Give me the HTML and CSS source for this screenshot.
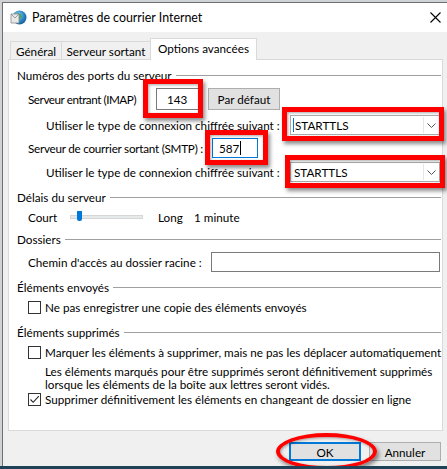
FILE: index.html
```html
<!DOCTYPE html>
<html lang="fr">
<head>
<meta charset="utf-8">
<link rel="stylesheet" href="styles.css">
</head>
<body>
<div class="window">
  <div class="titlebar">
    <svg class="app-icon" width="17" height="17" viewBox="0 0 17 17">
      <defs>
        <radialGradient id="g" cx="0.4" cy="0.35" r="0.7">
          <stop offset="0" stop-color="#9fd8f0"/>
          <stop offset="0.6" stop-color="#2a86c4"/>
          <stop offset="1" stop-color="#135d96"/>
        </radialGradient>
      </defs>
      <circle cx="9.5" cy="8.5" r="7" fill="url(#g)"/>
      <path d="M7 4 l4 1 l1 3 l-2 2 l-1 4 l-2 -3 z" fill="#3aa35a" opacity="0.8"/>
      <path d="M1 5 h8 v9 h-8 z" fill="#e8e8e8" stroke="#8a8a8a" stroke-width="0.8"/>
      <path d="M1 5 l4 4 l4 -4" fill="none" stroke="#8a8a8a" stroke-width="0.8"/>
    </svg>
    <span class="title">Paramètres de courrier Internet</span>
    <svg class="close" width="11" height="11" viewBox="0 0 11 11">
      <path d="M0.5 0.5 L10.5 10.5 M10.5 0.5 L0.5 10.5" stroke="#000" stroke-width="1.1"/>
    </svg>
  </div>
  <div class="content">
    <div class="tabs">
      <div class="tab tab-gen">Général</div>
      <div class="tab tab-out">Serveur sortant</div>
      <div class="tab tab-adv active">Options avancées</div>
    </div>
    <div class="pane">
      <div class="head h1"><span>Numéros des ports du serveur</span><i class="line"></i></div>

      <div class="row r-imap">
        <span class="lbl lbl-imap">Serveur entrant (IMAP)</span>
        <span class="mark-wrap">
          <span class="input in-imap">143</span>
          <span class="redbox rb-imap"></span>
        </span>
        <span class="btn btn-def">Par défaut</span>
      </div>

      <div class="row r-enc1">
        <span class="lbl lbl-enc">Utiliser le type de connexion chiffrée suivant :</span>
        <span class="mark-wrap">
          <span class="select sel1"><span class="caret"></span>STARTTLS<span class="chev"><svg width="9" height="5" viewBox="0 0 9 5"><path d="M0.5 0.5 L4.5 4.5 L8.5 0.5" fill="none" stroke="#555" stroke-width="1"/></svg></span></span>
          <span class="redbox rb-enc1"></span>
        </span>
      </div>

      <div class="row r-smtp">
        <span class="lbl lbl-smtp">Serveur de courrier sortant (SMTP) :</span>
        <span class="mark-wrap">
          <span class="input in-smtp focus">587<span class="cursor"></span></span>
          <span class="redbox rb-smtp"></span>
        </span>
      </div>

      <div class="row r-enc2">
        <span class="lbl lbl-enc">Utiliser le type de connexion chiffrée suivant :</span>
        <span class="mark-wrap">
          <span class="select sel2">STARTTLS<span class="chev"><svg width="9" height="5" viewBox="0 0 9 5"><path d="M0.5 0.5 L4.5 4.5 L8.5 0.5" fill="none" stroke="#555" stroke-width="1"/></svg></span></span>
          <span class="redbox rb-enc2"></span>
        </span>
      </div>

      <div class="head h2"><span>Délais du serveur</span><i class="line"></i></div>
      <div class="row r-slider">
        <span class="lbl lbl-court">Court</span>
        <span class="track"><span class="thumb"></span></span>
        <span class="lbl lbl-long">Long</span>
        <span class="lbl">1 minute</span>
      </div>

      <div class="head h3"><span>Dossiers</span><i class="line"></i></div>
      <div class="row r-path">
        <span class="lbl lbl-path">Chemin d'accès au dossier racine :</span>
        <span class="input in-path"></span>
      </div>

      <div class="head h4"><span>Éléments envoyés</span><i class="line"></i></div>
      <div class="row r-chk1">
        <span class="chk"></span>
        <span class="lbl">Ne pas enregistrer une copie des éléments envoyés</span>
      </div>

      <div class="head h5"><span>Éléments supprimés</span><i class="line"></i></div>
      <div class="row r-chk2">
        <span class="chk"></span>
        <span class="lbl nowrap">Marquer les éléments à supprimer, mais ne pas les déplacer automatiquement</span>
      </div>
      <p class="para">Les éléments marqués pour être supprimés seront définitivement supprimés<br>lorsque les éléments de la boîte aux lettres seront vidés.</p>
      <div class="row r-chk3">
        <span class="chk checked"><svg width="11" height="11" viewBox="0 0 11 11"><path d="M1.5 5.5 L4.2 8.3 L9.8 2.2" fill="none" stroke="#222" stroke-width="1.1"/></svg></span>
        <span class="lbl">Supprimer définitivement les éléments en changeant de dossier en ligne</span>
      </div>
    </div>
    <div class="footer">
      <span class="mark-wrap">
        <span class="btn btn-ok">OK</span>
        <span class="ellipse"></span>
      </span>
      <span class="btn btn-cancel">Annuler</span>
    </div>
  </div>
</div>
</body>
</html>
```

FILE: styles.css
```css
* { box-sizing: border-box; }
html, body { margin: 0; padding: 0; }
body {
  width: 447px;
  height: 469px;
  overflow: hidden;
  background: #cfd3d6;
  font-family: Lato, "Noto Sans", sans-serif;
  font-size: 11.7px;
  color: #000;
  position: relative;
}
.window {
  position: relative;
  margin: 2px 0 0 2px;
  width: 450px;
  height: 464px;
  border-left: 1px solid #6f6f6f;
  border-top: 1px solid #6f6f6f;
  background: #f0f0f0;
  display: flex;
  flex-direction: column;
}
body::after {
  content: "";
  position: absolute;
  left: 0; right: 0; bottom: 0;
  height: 3px;
  background: #1e4257;
}
.titlebar {
  height: 29px;
  background: #fff;
  display: flex;
  align-items: center;
  padding-left: 7px;
}
.app-icon { flex: none; }
.title { margin-left: 5px; font-size: 12.4px; }
.close { margin-left: auto; margin-right: 11px; }
.content {
  flex: 1;
  display: flex;
  flex-direction: column;
  padding: 0 0 0 5px;
}
.tabs {
  height: 27px;
  display: flex;
  align-items: flex-end;
  padding-left: 2px;
  position: relative;
  z-index: 2;
}
.tab {
  height: 18px;
  border: 1px solid #d9d9d9;
  border-bottom: none;
  display: flex;
  align-items: center;
  justify-content: center;
  background: #f0f0f0;
}
.tab-gen { width: 52px; }
.tab-out { width: 89px; border-left: none; }
.tab-adv { width: 107px; margin-left: -1px; }
.tab.active {
  height: 22px;
  background: #fff;
  align-items: flex-start;
  padding-top: 2px;
  margin-bottom: -1px;
}
.pane {
  width: 435px;
  height: 372px;
  background: #fff;
  border: 1px solid #d9d9d9;
  padding: 0 1px 0 8px;
  display: flex;
  flex-direction: column;
  position: relative;
  z-index: 1;
}
.head {
  height: 16px;
  display: flex;
  align-items: center;
  gap: 4px;
  flex: none;
}
.head .line {
  flex: 1;
  height: 0;
  border-top: 1px solid #a0a0a0;
  margin-top: 1px;
}
.h1 { margin-top: 7px; }
.h2 { margin-top: 6px; }
.h3 { margin-top: 6px; }
.h4 { margin-top: 7px; }
.h5 { margin-top: 9px; }
.row {
  display: flex;
  align-items: center;
  padding-left: 11px;
  flex: none;
}
.lbl { white-space: nowrap; }
.r-imap { margin-top: 5px; height: 22px; }
.lbl-imap { width: 128px; letter-spacing: -0.45px; }
.r-enc1 { margin-top: 4px; height: 22px; }
.r-enc1, .r-enc2 { padding-left: 29px; }
.lbl-enc { width: 244px; }
.r-smtp { margin-top: 1px; height: 22px; }
.lbl-smtp { width: 184px; letter-spacing: -0.25px; }
.r-enc2 { margin-top: 2px; height: 22px; }
.r-slider { margin-top: 4px; height: 16px; }
.lbl-court { width: 42px; }
.track {
  width: 73px;
  height: 4px;
  background: #e7eaea;
  border: 1px solid #d6d6d6;
  position: relative;
}
.thumb {
  position: absolute;
  left: 6px;
  top: -5px;
  width: 5px;
  height: 10px;
  background: #0078d7;
  border-radius: 0 0 2px 2px;
}
.lbl-long { margin-left: 15px; width: 36px; }
.r-path { margin-top: 4px; height: 21px; }
.lbl-path { width: 183px; }
.in-path { width: 229px; height: 20px; }
.r-chk1 { margin-top: 4px; height: 16px; }
.r-chk2 { margin-top: 4px; height: 16px; }
.r-chk3 { margin-top: 1px; height: 16px; }
.chk {
  width: 13px;
  height: 13px;
  border: 1px solid #333;
  background: #fff;
  margin-right: 4px;
  flex: none;
  display: flex;
  align-items: center;
  justify-content: center;
}
.para {
  margin: 5px 0 0 28px;
  line-height: 12.5px;
  white-space: nowrap;
}
.input {
  display: inline-flex;
  align-items: center;
  background: #fff;
  border: 1px solid #7a7a7a;
  padding-left: 5px;
}
.in-imap { width: 43px; height: 22px; padding-left: 10px; }
.in-smtp { width: 46px; height: 20px; padding-left: 6px; }
.input.focus { border-color: #0078d7; }
.cursor {
  display: inline-block;
  width: 1px;
  height: 14px;
  background: #000;
  margin-left: 1px;
}
.btn {
  display: inline-flex;
  align-items: center;
  justify-content: center;
  background: #e1e1e1;
  border: 1px solid #adadad;
}
.btn-def { margin-left: 9px; width: 72px; height: 22px; }
.select {
  display: flex;
  align-items: center;
  width: 150px;
  height: 20px;
  border: 1px solid #acacac;
  background: #fff;
  padding-left: 2px;
  position: relative;
}
.sel2 { padding-left: 3px; }
.caret {
  width: 1px;
  height: 14px;
  background: #0078d7;
  margin-right: 1px;
}
.chev {
  margin-left: auto;
  width: 15px;
  height: 16px;
  display: flex;
  align-items: center;
  justify-content: center;
  border-left: 1px solid #e6e6e6;
  margin-right: 1px;
}
.mark-wrap { position: relative; display: inline-flex; }
.redbox, .ellipse {
  position: absolute;
  border: 5px solid #f00;
  box-shadow: 2px 3px 4px rgba(0,0,0,0.45), inset 1px 1px 3px rgba(0,0,0,0.35);
  pointer-events: none;
}
.rb-imap { left: -13px; right: -4px; top: -9px; bottom: -8px; }
.rb-enc1 { left: -8px; right: -4px; top: -8px; bottom: -6px; }
.rb-smtp { left: -7px; right: -10px; top: -8px; bottom: -7px; }
.rb-enc2 { left: -5px; right: -5px; top: -7px; bottom: -6px; }
.footer {
  display: flex;
  align-items: flex-start;
  padding-top: 11px;
  padding-left: 281px;
}
.btn-ok {
  width: 72px;
  height: 19px;
  border: 2px solid #0078d7;
}
.btn-cancel { margin-left: 8px; width: 72px; height: 19px; }
.ellipse {
  left: -13px; right: -16px; top: -9px; bottom: -9px;
  border-width: 4px;
  border-radius: 50%;
}
```
